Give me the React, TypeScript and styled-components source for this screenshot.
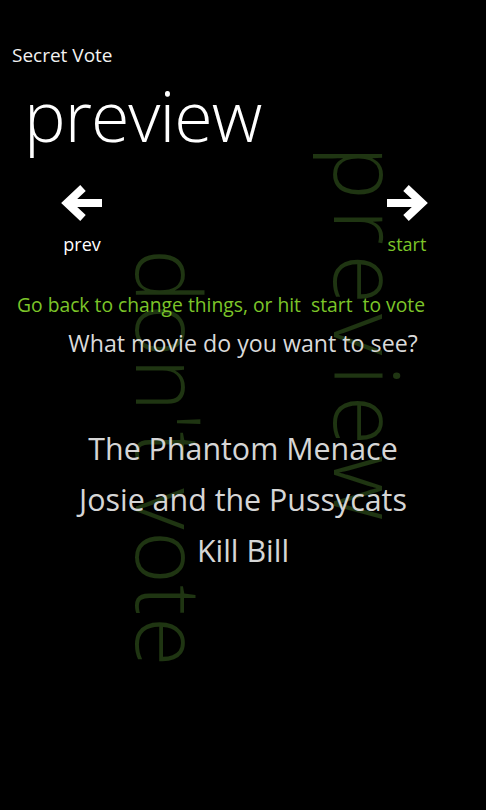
import React from "react";
import styled, { createGlobalStyle } from "styled-components";

const Global = createGlobalStyle`
  html, body { margin: 0; padding: 0; background: #000; }
  #root { width: 486px; height: 810px; }
`;

const Page = styled.div`
  position: relative;
  width: 486px;
  height: 810px;
  overflow: hidden;
  background: #000;
  font-family: "Open Sans", "Noto Sans", sans-serif;
  color: #fff;
`;

const Watermark = styled.div<{ $left: number; $top: number; $spacing: number }>`
  position: absolute;
  left: ${(p) => p.$left}px;
  top: ${(p) => p.$top}px;
  transform: rotate(90deg);
  transform-origin: 0 0;
  font-size: 90px;
  line-height: 1;
  font-weight: 300;
  letter-spacing: ${(p) => p.$spacing}px;
  white-space: nowrap;
  color: #1f3512;
  pointer-events: none;
`;

const Content = styled.div`
  position: relative;
  display: flex;
  flex-direction: column;
`;

const AppName = styled.div`
  padding: 43px 0 0 12px;
  font-size: 19px;
  line-height: 24px;
  color: #f2f2f2;
`;

const PageTitle = styled.h1`
  margin: 10px 0 0 24px;
  font-size: 70px;
  font-weight: 300;
  line-height: 76px;
  letter-spacing: -1px;
  color: #fff;
`;

const NavRow = styled.div`
  display: flex;
  justify-content: space-between;
  padding: 32px 58px 0 61px;
`;

const NavButton = styled.div`
  display: flex;
  flex-direction: column;
  align-items: center;
  gap: 13px;
`;

const NavLabel = styled.span<{ $accent?: boolean }>`
  font-size: 18px;
  line-height: 20px;
  color: ${(p) => (p.$accent ? "#7cc529" : "#fff")};
`;

const Hint = styled.div`
  margin-top: 38px;
  padding-left: 17px;
  font-size: 19.3px;
  line-height: 26px;
  white-space: pre;
  color: #7cc529;
`;

const Question = styled.div`
  margin-top: 10px;
  text-align: center;
  font-size: 23.2px;
  line-height: 30px;
  color: #dadada;
`;

const MovieList = styled.ul`
  list-style: none;
  margin: 65px 0 0;
  padding: 0;
  display: flex;
  flex-direction: column;
  align-items: center;
`;

const Movie = styled.li`
  font-size: 30.4px;
  line-height: 51px;
  color: #d6d6d6;
`;

const Arrow = ({ dir }: { dir: "left" | "right" }) => (
  <svg
    width="42"
    height="36"
    viewBox="0 0 42 36"
    style={{ transform: dir === "right" ? "scaleX(-1)" : undefined }}
  >
    <path
      d="M41 18 H6 M22 3 L6 18 L22 33"
      fill="none"
      stroke="#fff"
      strokeWidth="8"
      strokeLinejoin="miter"
    />
  </svg>
);

export default function App() {
  const movies = ["The Phantom Menace", "Josie and the Pussycats", "Kill Bill"];
  return (
    <Page>
      <Global />
      <Watermark $left={414} $top={146} $spacing={10}>preview</Watermark>
      <Watermark $left={216} $top={249} $spacing={1.5}>don't vote</Watermark>
      <Content>
        <AppName>Secret Vote</AppName>
        <PageTitle>preview</PageTitle>
        <NavRow>
          <NavButton>
            <Arrow dir="left" />
            <NavLabel>prev</NavLabel>
          </NavButton>
          <NavButton>
            <Arrow dir="right" />
            <NavLabel $accent>start</NavLabel>
          </NavButton>
        </NavRow>
        <Hint>{"Go back to change things, or hit  start  to vote"}</Hint>
        <Question>What movie do you want to see?</Question>
        <MovieList>
          {movies.map((m) => (
            <Movie key={m}>{m}</Movie>
          ))}
        </MovieList>
      </Content>
    </Page>
  );
}
